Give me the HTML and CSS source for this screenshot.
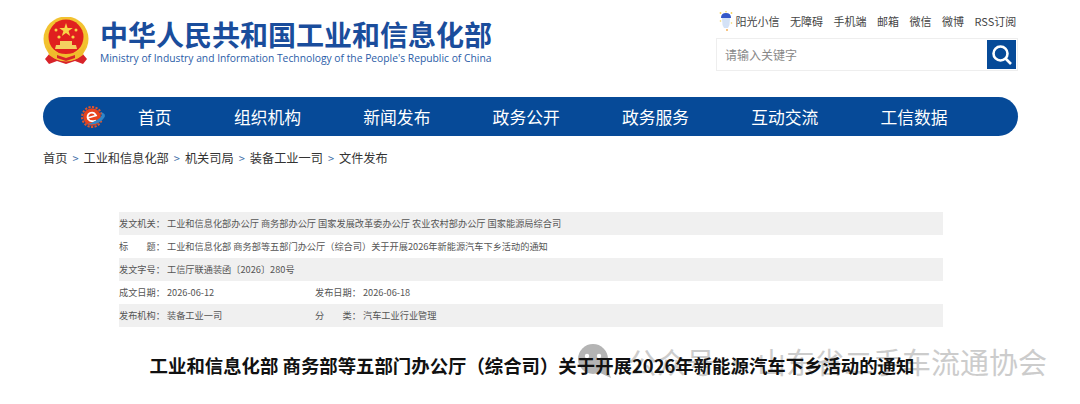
FILE: index.html
```html
<!DOCTYPE html>
<html lang="zh-CN">
<head>
    <meta charset="UTF-8">
    <title>工业和信息化部</title>
    <link rel="stylesheet" href="styles.css">
</head>
<body>

    <div class="wrap">
        <!-- Header -->
        <div class="header">
            <div class="logo">
                <svg class="emblem" width="46" height="50" viewBox="0 0 46 50">
                    <path d="M7 36 L2 42 L6 47 L14 44 L23 47 L32 44 L40 47 L44 42 L39 36 Z" fill="#d8232a"/>
                    <circle cx="23" cy="22" r="22.5" fill="#f2c230"/>
                    <circle cx="23" cy="20" r="17.5" fill="#e0201f"/>
                    <path d="M23 6 L24.6 11 L29.8 11 L25.6 14 L27.2 19 L23 16 L18.8 19 L20.4 14 L16.2 11 L21.4 11 Z" fill="#f8d448"/>
                    <circle cx="13" cy="13" r="1.5" fill="#f8d448"/>
                    <circle cx="33" cy="13" r="1.5" fill="#f8d448"/>
                    <circle cx="16" cy="20" r="1.6" fill="#f8d448"/>
                    <circle cx="30" cy="20" r="1.6" fill="#f8d448"/>
                    <path d="M12 32 L13 28 L17 28 L17 24 L29 24 L29 28 L33 28 L34 32 Z" fill="#f4d060"/>
                    <path d="M4 28 Q10 37 23 37 Q36 37 42 28 L40 38 Q32 44 23 44 Q14 44 6 38 Z" fill="#f0bb2c"/>
                    <path d="M14 38 L23 41 L32 38 L32 41 L23 44 L14 41 Z" fill="#d8232a"/>
                </svg>
                <div class="logo-text">
                    <div class="logo-cn">中华人民共和国工业和信息化部</div>
                    <div class="logo-en">Ministry of Industry and Information Technology of the People's Republic of China</div>
                </div>
            </div>
            <div class="header-right">
                <div class="top-links">
                    <svg class="sun-icon" width="14" height="20" viewBox="0 0 14 20">
                        <path d="M2 7 Q2 2 7 2 Q12 2 12 7 Z" fill="#3458c8"/>
                        <path d="M3 7 L11 7 L10.5 14 L9 17 L5 17 L3.5 14 Z" fill="#d4e2f6"/>
                        <circle cx="1.5" cy="2" r="0.9" fill="#f4d35a"/>
                        <circle cx="7" cy="0.8" r="0.8" fill="#f4d35a"/>
                        <circle cx="12.5" cy="2" r="0.9" fill="#f4d35a"/>
                        <circle cx="1.5" cy="10" r="0.8" fill="#f4d35a"/>
                        <circle cx="12.5" cy="12" r="0.8" fill="#f4d35a"/>
                        <circle cx="8" cy="19" r="0.9" fill="#f4a94a"/>
                    </svg>
                    <span>阳光小信</span>
                    <span>无障碍</span>
                    <span>手机端</span>
                    <span>邮箱</span>
                    <span>微信</span>
                    <span>微博</span>
                    <span>RSS订阅</span>
                </div>
                <div class="search-box">
                    <span class="search-text">请输入关键字</span>
                    <div class="search-btn">
                        <svg width="22" height="22" viewBox="0 0 22 22" fill="none" stroke="white" stroke-width="2.6">
                            <circle cx="9.5" cy="9.5" r="7"/>
                            <path d="M14.5 14.5 L20 20"/>
                        </svg>
                    </div>
                </div>
            </div>
        </div>

        <!-- Nav -->
        <div class="nav">
            <svg class="nav-logo" width="26" height="24" viewBox="0 0 26 24">
                <circle cx="11" cy="12" r="10" fill="none" stroke="#e2552a" stroke-width="2" stroke-dasharray="2.2 1.4"/>
                <circle cx="11" cy="12" r="8.8" fill="#e8431c"/>
                <path d="M6.5 13 L15 10.5 Q13 6.5 9 8 Q5.5 10 7 14 Q9.5 17.5 15 15.5" fill="none" stroke="white" stroke-width="1.8"/>
                <path d="M6 19 Q17 21 23 13 Q26 9 20 7 Q23 11 16 15 Q11 18 6 19 Z" fill="#2f86c9"/>
            </svg>
            <a class="nav-item first">首页</a>
            <a class="nav-item">组织机构</a>
            <a class="nav-item">新闻发布</a>
            <a class="nav-item">政务公开</a>
            <a class="nav-item">政务服务</a>
            <a class="nav-item">互动交流</a>
            <a class="nav-item">工信数据</a>
        </div>

        <!-- Breadcrumb -->
        <div class="crumbs">
            <span>首页</span><i>&gt;</i>
            <span>工业和信息化部</span><i>&gt;</i>
            <span>机关司局</span><i>&gt;</i>
            <span>装备工业一司</span><i>&gt;</i>
            <span>文件发布</span>
        </div>
    </div>

    <!-- Document info -->
    <div class="doc-info">
        <div class="row grey"><span class="label">发文机关：</span><span>工业和信息化部办公厅 商务部办公厅 国家发展改革委办公厅 农业农村部办公厅 国家能源局综合司</span></div>
        <div class="row"><span class="label">标　　题：</span><span>工业和信息化部 商务部等五部门办公厅（综合司）关于开展2026年新能源汽车下乡活动的通知</span></div>
        <div class="row grey"><span class="label">发文字号：</span><span>工信厅联通装函〔2026〕280号</span></div>
        <div class="row">
            <span class="label">成文日期：</span><span class="half">2026-06-12</span>
            <span class="label">发布日期：</span><span>2026-06-18</span>
        </div>
        <div class="row grey">
            <span class="label">发布机构：</span><span class="half">装备工业一司</span>
            <span class="label">分　　类：</span><span>汽车工业行业管理</span>
        </div>
    </div>

    <h1 class="doc-title">工业和信息化部 商务部等五部门办公厅（综合司）关于开展2026年新能源汽车下乡活动的通知</h1>

    <!-- Watermark -->
    <div class="watermark">
        <svg width="38" height="36" viewBox="0 0 38 36">
            <circle cx="17" cy="16" r="15" fill="#b4b4b4"/>
            <path d="M20 28 L35 35 L30 22 Z" fill="#b4b4b4"/>
            <circle cx="11" cy="13" r="2.2" fill="white"/>
            <circle cx="23" cy="13" r="2.2" fill="white"/>
        </svg>
        <span>公众号 · 山东省二手车流通协会</span>
    </div>

</body>
</html>
```

FILE: styles.css
```css
html, body {
    height: 404px;
    overflow: hidden;
}
body {
    position: relative;
    margin: 0;
    background-color: white;
    font-family: "Noto Sans CJK SC", "Liberation Sans", sans-serif;
    color: #333;
}
.wrap {
    padding: 0 62px 0 43px;
}
.header {
    display: flex;
    justify-content: space-between;
    height: 97px;
}
.logo {
    display: flex;
    padding-top: 17px;
    height: 50px;
}
.emblem {
    margin-right: 11px;
}
.logo-cn {
    font-size: 28px;
    line-height: 32px;
    margin-top: 1px;
    font-weight: 700;
    color: #1a4d9c;
    white-space: nowrap;
}
.logo-en {
    font-family: "Open Sans", sans-serif;
    font-size: 10.3px;
    line-height: 16px;
    color: #2b5da8;
    white-space: nowrap;
}
.header-right {
    width: 302px;
}
.top-links {
    display: flex;
    align-items: center;
    gap: 10.5px;
    height: 20px;
    margin-top: 11px;
    font-size: 11px;
    color: #444;
    white-space: nowrap;
}
.sun-icon {
    margin-left: 3px;
    margin-right: -8px;
}
.search-box {
    display: flex;
    justify-content: space-between;
    align-items: center;
    height: 31px;
    margin-top: 7px;
    border: 1px solid #eee;
}
.search-text {
    padding-left: 8px;
    font-size: 12px;
    color: #888;
}
.search-btn {
    display: flex;
    align-items: center;
    justify-content: center;
    width: 29px;
    height: 29px;
    margin-right: 1px;
    background-color: #064a98;
}
.nav {
    display: flex;
    align-items: center;
    height: 39px;
    border-radius: 20px;
    background-color: #064a98;
}
.nav-logo {
    margin-left: 38px;
    margin-right: 31px;
}
.nav-item {
    width: 129.3px;
    font-size: 16.8px;
    color: white;
    white-space: nowrap;
}
.nav-item.first {
    width: 96px;
}
.crumbs {
    display: flex;
    align-items: center;
    gap: 5px;
    margin-top: 13px;
    height: 18px;
    font-size: 12.2px;
    color: #333;
}
.crumbs i {
    font-style: normal;
    color: #3f6fa8;
    font-size: 11px;
}
.doc-info {
    margin: 45px 0 0 119px;
    width: 824px;
    font-size: 9.2px;
    color: #555;
}
.row {
    display: flex;
    align-items: center;
    box-sizing: border-box;
    height: 23px;
    padding-bottom: 1px;
    white-space: nowrap;
}
.grey {
    background-color: #f0f0f0;
}
.label {
    width: 48px;
}
.half {
    width: 148px;
}
.doc-title {
    position: relative;
    z-index: 1;
    margin: 26px 0 0;
    width: 1064px;
    text-align: center;
    font-size: 18.4px;
    line-height: 24px;
    font-weight: 700;
    color: #111;
    white-space: nowrap;
}
.watermark {
    position: absolute;
    left: 576px;
    top: 343px;
    display: flex;
    align-items: center;
    gap: 14px;
    font-size: 29px;
    line-height: 36px;
    color: #ccc;
    white-space: nowrap;
}
```
